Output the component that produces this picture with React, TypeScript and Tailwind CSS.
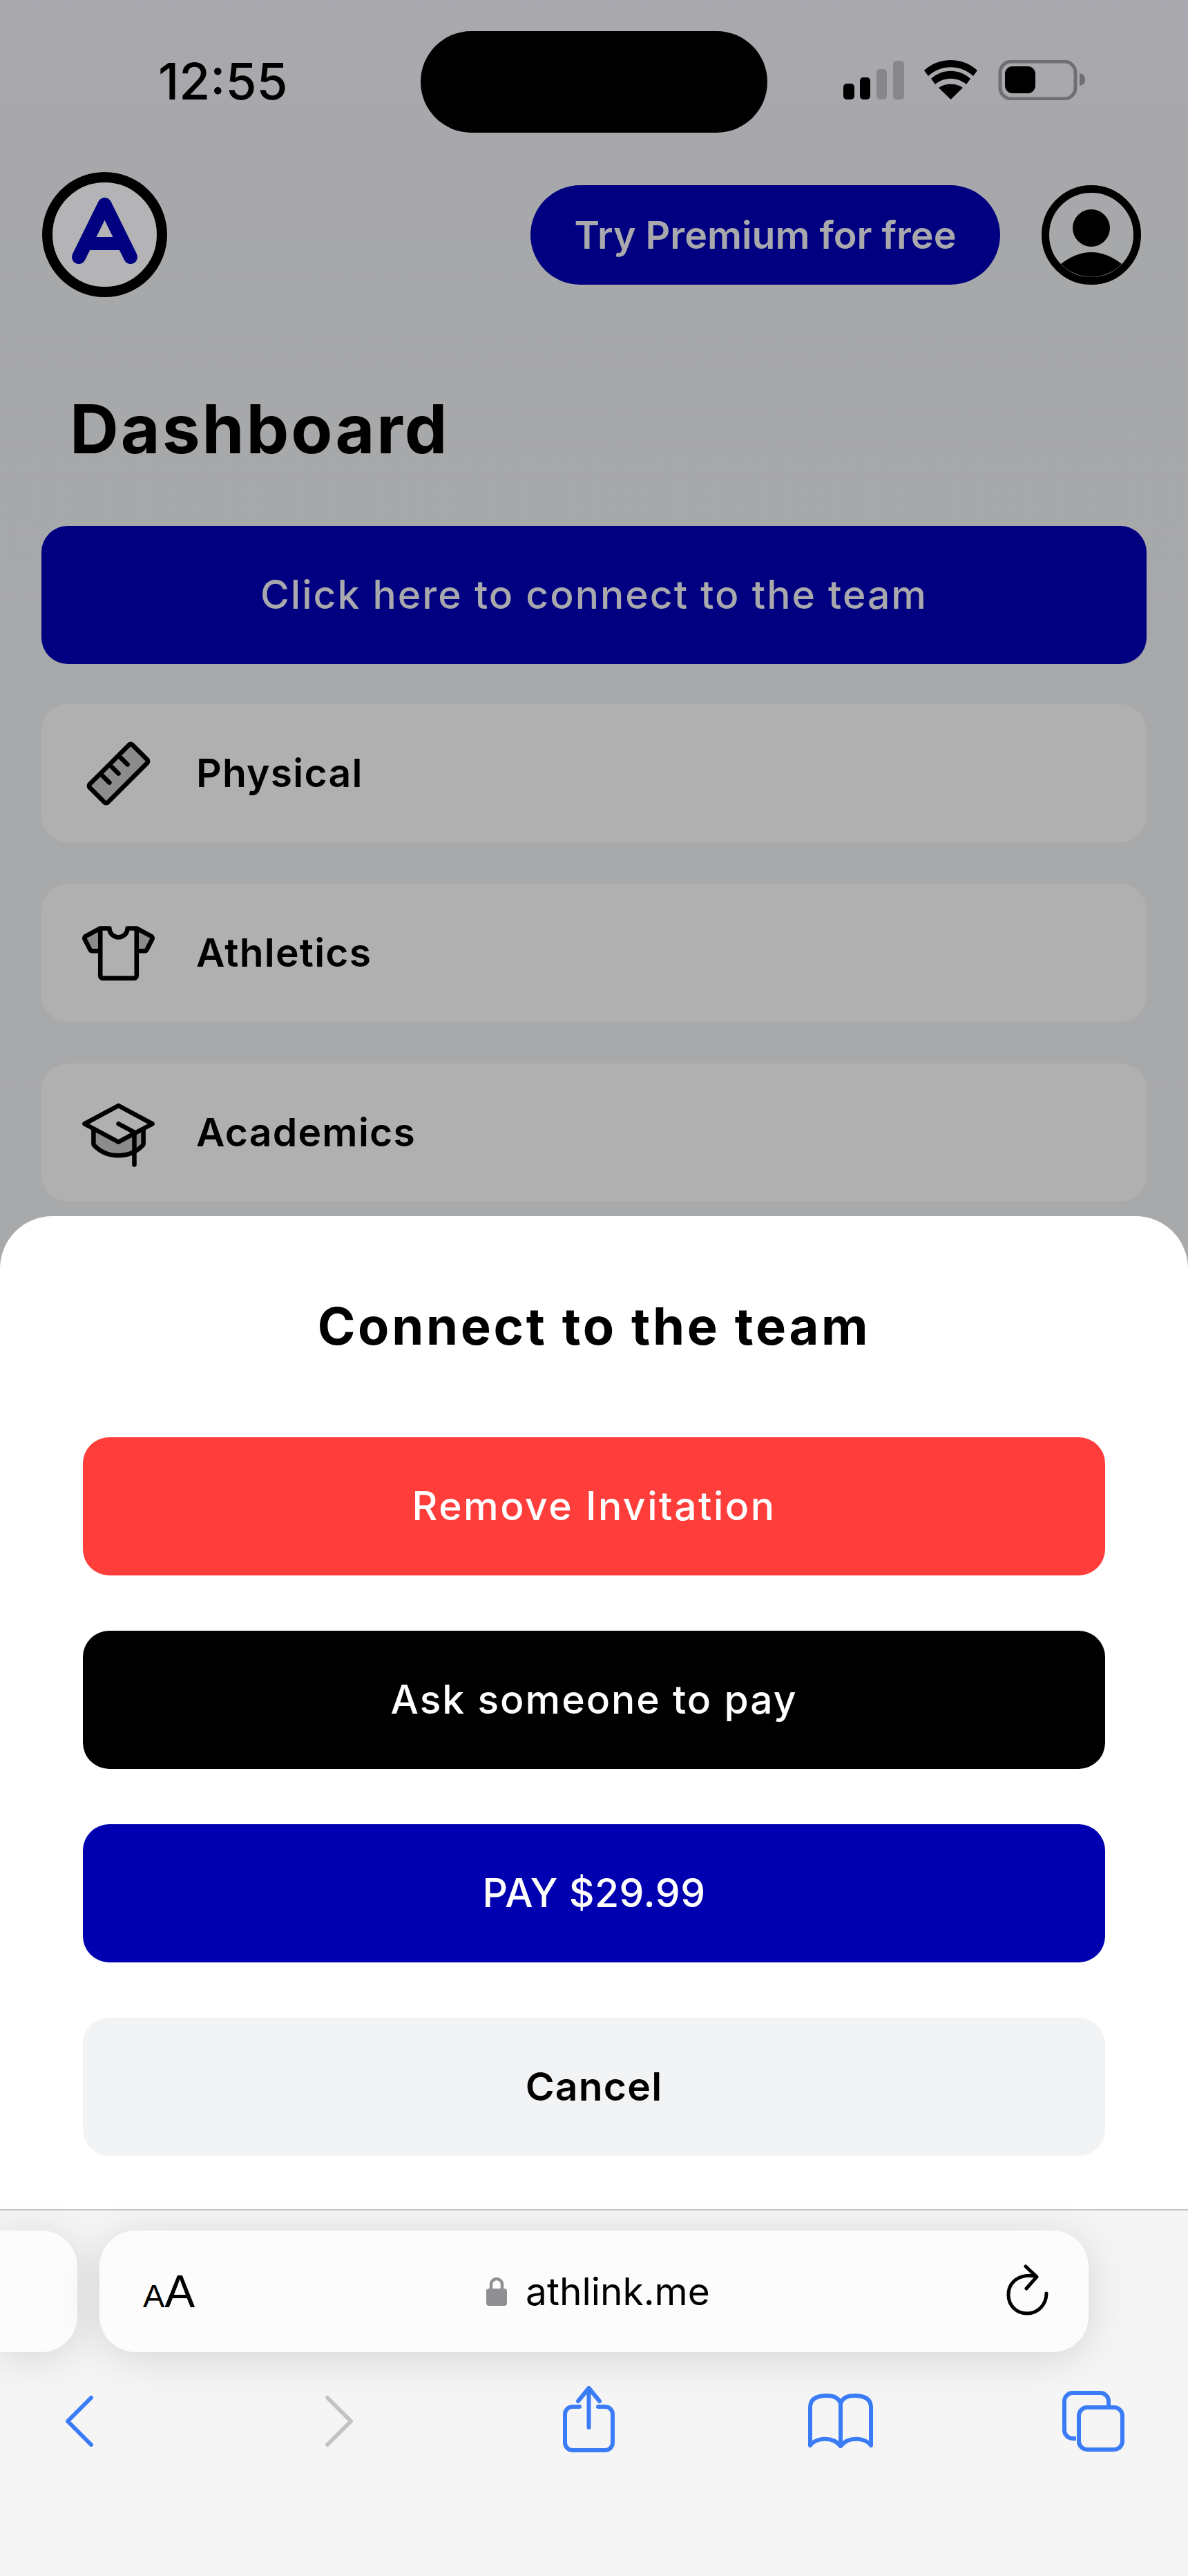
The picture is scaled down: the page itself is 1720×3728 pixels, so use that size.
import { PiGraduationCapDuotone, PiRulerDuotone, PiTShirtDuotone } from "react-icons/pi"

const rows = [
  { label: "Physical", Icon: PiRulerDuotone },
  { label: "Athletics", Icon: PiTShirtDuotone },
  { label: "Academics", Icon: PiGraduationCapDuotone },
]

const StatusIcons = () => (
  <svg width="352" height="58" viewBox="0 0 352 58" className="mt-[42px] ml-[110px]">
    <rect x="0" y="34" width="16" height="23" rx="5" fill="#000" />
    <rect x="24" y="25" width="15" height="32" rx="5" fill="#000" />
    <rect x="48" y="13" width="15" height="44" rx="5" fill="#87878b" />
    <rect x="72" y="1" width="16" height="56" rx="5" fill="#87878b" />
    <path d="M117 15 C138 -5 173 -5 194 15 L188 23 C170 6 141 6 123 23 Z" fill="#000" />
    <path d="M127 27 C143 12 168 12 184 27 L178 35 C165 24 146 24 133 35 Z" fill="#000" />
    <path d="M138 40 C147 33 164 33 173 40 L155.5 57 Z" fill="#000" />
    <rect x="227" y="2" width="109" height="54" rx="16" fill="none" stroke="#6f6f73" strokeWidth="5" />
    <rect x="234" y="9" width="44" height="39" rx="11" fill="#000" />
    <path d="M342 19 C348 20 350 24 350 28 C350 33 348 36 342 37 Z" fill="#6f6f73" />
  </svg>
)

const Logo = () => (
  <svg width="181" height="181" viewBox="0 0 181 181">
    <circle cx="90.5" cy="90.5" r="83" fill="#b4b4b6" stroke="#000" strokeWidth="15" />
    <path
      d="M53 123 L90.5 47 L128 123"
      fill="none"
      stroke="#000080"
      strokeWidth="20"
      strokeLinecap="round"
      strokeLinejoin="round"
    />
    <path d="M62 103.5 H119" fill="none" stroke="#000080" strokeWidth="19" />
  </svg>
)

const Avatar = () => (
  <svg width="144" height="144" viewBox="0 0 144 144" className="ml-[60px]">
    <circle cx="72" cy="72" r="66.5" fill="none" stroke="#000" strokeWidth="11" />
    <circle cx="72" cy="62" r="27" fill="#000" />
    <path d="M28 114 Q72 80 116 114 A61 61 0 0 1 28 114 Z" fill="#000" />
  </svg>
)

const SheetButton = ({ label, className }: { label: string; className: string }) => (
  <button className={`h-[200px] w-full rounded-[38px] text-[57px] ${className}`}>
    {label}
  </button>
)

const App = () => {
  return (
    <div className="flex h-[3728px] w-[1720px] flex-col overflow-hidden bg-[#a8a9ab] font-['Inter',sans-serif] text-black">
      {/* Dimmed page behind the sheet */}
      <div className="flex h-[1760px] shrink-0 flex-col bg-linear-to-b from-[#a9a8ae] via-[#a7a8aa] via-20% to-[#a8a9ab]">
        <div className="flex items-start pt-[45px]">
          <div className="w-[609px] pl-[229px] pt-[29px] text-[73px] leading-[88px] font-medium">12:55</div>
          <div className="h-[147px] w-[502px] rounded-[74px] bg-black" />
          <StatusIcons />
        </div>

        <div className="mt-[57px] flex items-center pl-[61px]">
          <Logo />
          <div className="ml-[526px] flex h-[144px] w-[680px] items-center justify-center rounded-full bg-[#000080] text-[55.5px] font-semibold text-[#a9a9ad]">
            Try Premium for free
          </div>
          <Avatar />
        </div>

        <h1 className="mt-[133px] pl-[101px] text-[98px] leading-[116px] font-bold tracking-[3px]">Dashboard</h1>

        <div className="mx-[60px] mt-[82px] flex h-[200px] items-center justify-center rounded-[38px] bg-[#000080] text-[57px] font-medium tracking-[2px] text-[#a9a9ad]">
          Click here to connect to the team
        </div>

        <div className="mx-[60px] mt-[58px] flex flex-col gap-[60px]">
          {rows.map(({ label, Icon }) => (
            <div key={label} className="flex h-[200px] items-center gap-[60px] rounded-[38px] bg-[#b0b0b0] pl-[59px]">
              <Icon size={105} />
              <span className="text-[57px] font-semibold tracking-[1.2px]">{label}</span>
            </div>
          ))}
        </div>
      </div>

      {/* Bottom sheet */}
      <div className="flex h-[1437px] shrink-0 flex-col rounded-t-[76px] bg-white px-[120px]">
        <h2 className="mt-[115px] text-center text-[74px] leading-[88px] font-bold tracking-[3.7px]">
          Connect to the team
        </h2>
        <div className="mt-[117px] flex flex-col gap-[80px]">
          <SheetButton label="Remove Invitation" className="bg-[#ff3e3c] font-medium tracking-[2.5px] text-white" />
          <SheetButton label="Ask someone to pay" className="bg-black font-medium tracking-[2px] text-white" />
          <SheetButton label="PAY $29.99" className="bg-[#0000b0] font-medium tracking-[0.5px] text-white" />
          <SheetButton label="Cancel" className="bg-[#f2f3f5] font-semibold tracking-[1.2px] text-black" />
        </div>
      </div>

      {/* Safari toolbar */}
      <div className="flex flex-1 flex-col border-t-2 border-[#c4c4c6] bg-[#f5f5f6] pt-[29px]">
        <div className="flex gap-[32px]">
          <div className="h-[176px] w-[112px] rounded-r-[52px] bg-[#fcfcfd] shadow-[0_8px_60px_rgba(0,0,0,0.13)]" />
          <div className="flex h-[176px] w-[1432px] items-center rounded-[52px] bg-[#fcfcfd] pr-[57px] pl-[63px] shadow-[0_8px_60px_rgba(0,0,0,0.13)]">
            <div className="flex w-[497px] items-baseline font-['Liberation_Sans',sans-serif] leading-none">
              <span className="text-[47px]">A</span>
              <span className="text-[66px]">A</span>
            </div>
            <svg width="30" height="42" viewBox="0 0 30 42">
              <path d="M7 19 V11 a8 8 0 0 1 16 0 V19" fill="none" stroke="#8e8e93" strokeWidth="4.5" />
              <rect x="0" y="17" width="30" height="25" rx="4" fill="#8e8e93" />
            </svg>
            <span className="ml-[27px] text-[55px] leading-none">athlink.me</span>
            <svg width="62" height="74" viewBox="0 0 62 74" className="mt-[-4px] ml-auto">
              <path
                d="M42 17 C18 13 3 26 3 44 C3 60 15 71 30 71 C46 71 58 58 58 42 M28 3 L44 18 L29 35"
                fill="none"
                stroke="#000"
                strokeWidth="5"
                strokeLinecap="round"
                strokeLinejoin="round"
              />
            </svg>
          </div>
        </div>

        <div className="mt-[45px] flex h-[110px] items-center pl-[55px]">
          <div className="flex w-[120px] justify-center">
            <svg width="42" height="74" viewBox="0 0 42 74">
              <path d="M38 3 L4 37 L38 71" fill="none" stroke="#3a7cf5" strokeWidth="6" strokeLinecap="round" strokeLinejoin="round" />
            </svg>
          </div>
          <div className="ml-[256px] flex w-[120px] justify-center">
            <svg width="42" height="74" viewBox="0 0 42 74">
              <path d="M4 3 L38 37 L4 71" fill="none" stroke="#c3c3c3" strokeWidth="6" strokeLinecap="round" strokeLinejoin="round" />
            </svg>
          </div>
          <div className="ml-[241px] flex w-[120px] justify-center">
            <svg width="75" height="102" viewBox="0 0 75 102">
              <path
                d="M24 30 H14 a11 11 0 0 0 -11 11 V82 a11 11 0 0 0 11 11 H61 a11 11 0 0 0 11 -11 V41 a11 11 0 0 0 -11 -11 H51 M37.5 3 V60 M22 22 L37.5 3 L53 22"
                fill="none"
                stroke="#3a7cf5"
                strokeWidth="6"
                strokeLinecap="round"
                strokeLinejoin="round"
              />
            </svg>
          </div>
          <div className="ml-[245px] flex w-[120px] justify-center">
            <svg width="94" height="80" viewBox="0 0 94 80">
              <path
                d="M47 14 C44 6 36 3 27 3 C12 3 3 8 3 20 V75 C10 65 34 60 47 76 C60 60 84 65 91 75 V20 C91 8 82 3 67 3 C58 3 50 6 47 14 Z M47 14 V76"
                fill="none"
                stroke="#3a7cf5"
                strokeWidth="6"
                strokeLinecap="round"
                strokeLinejoin="round"
              />
            </svg>
          </div>
          <div className="ml-[246px] flex w-[120px] justify-center">
            <svg width="90" height="88" viewBox="0 0 90 88">
              <path
                d="M20 69 H15 a12 12 0 0 1 -12 -12 V15 a12 12 0 0 1 12 -12 H55 a12 12 0 0 1 12 12 V22"
                fill="none"
                stroke="#3a7cf5"
                strokeWidth="6"
              />
              <rect x="24" y="24" width="63" height="61" rx="12" fill="none" stroke="#3a7cf5" strokeWidth="6" />
            </svg>
          </div>
        </div>
      </div>
    </div>
  )
}

export default App
